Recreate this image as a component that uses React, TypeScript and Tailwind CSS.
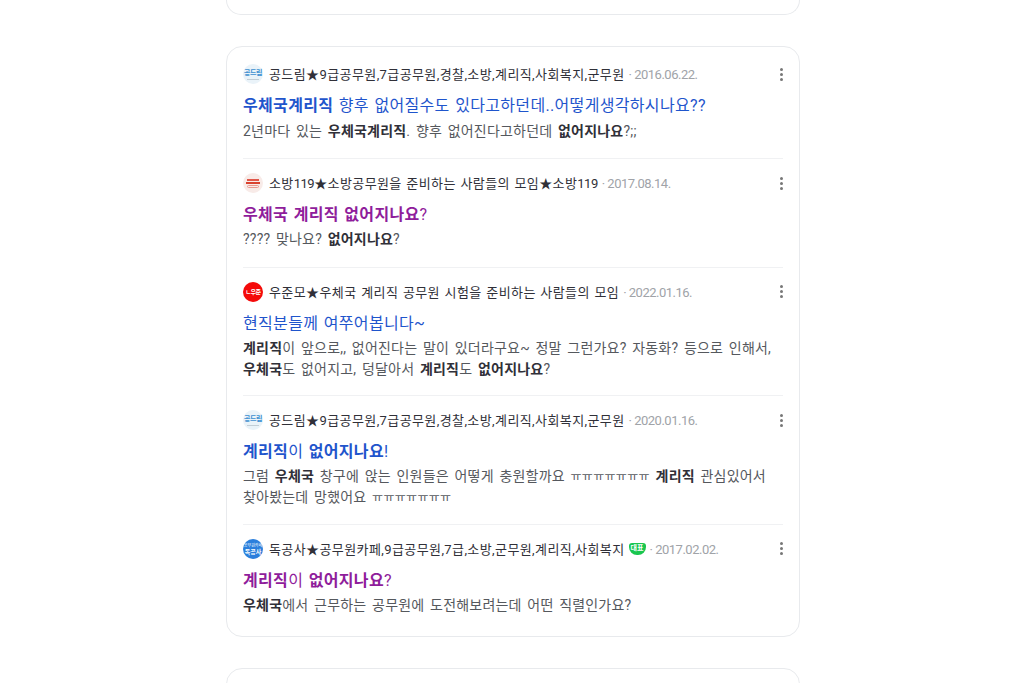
import { ReactNode } from 'react'

type Post = {
  logo: ReactNode
  cafe: ReactNode
  badge?: boolean
  date: string
  title: ReactNode
  visited?: boolean
  desc: ReactNode
}

function GongdreamLogo() {
  return (
    <div className="flex h-5 w-5 flex-col items-center justify-center rounded-full bg-[#eaf3f9]">
      <span className="text-[7px] leading-[8px] font-bold text-[#3d8fd0] whitespace-nowrap tracking-[-0.5px]">공드림</span>
      <span className="mt-[2px] h-px w-3 bg-[#c3ced6]" />
    </div>
  )
}

function SobangLogo() {
  return (
    <div className="flex h-5 w-5 flex-col items-center justify-center gap-px rounded-full bg-[#f8ebe8]">
      <span className="h-[2px] w-3 bg-[#e0574a]" />
      <span className="h-[2px] w-[14px] bg-[#d9432f]" />
      <span className="h-[3px] w-3 rounded-sm border border-[#e89a90]" />
    </div>
  )
}

function WoojunmoLogo() {
  return (
    <div className="flex h-5 w-5 items-center justify-center rounded-full bg-[#f40a0a]">
      <span className="text-[6px] font-bold leading-none text-white whitespace-nowrap tracking-[-0.5px]">ㄴ우준</span>
    </div>
  )
}

function DokgongsaLogo() {
  return (
    <div className="flex h-5 w-5 flex-col items-center justify-center rounded-full bg-[#2b7fdc]">
      <span className="text-[4px] leading-[5px] text-white whitespace-nowrap">공무원카페</span>
      <span className="text-[6px] font-bold leading-[7px] text-white whitespace-nowrap">독공사</span>
    </div>
  )
}

// 'ㅠ' runs sit tighter than the rest of the snippet
function Cry({ n = 7 }: { n?: number }) {
  return <span className="text-[12px] leading-[0] tracking-[0.3px]">{'ㅠ'.repeat(n)}</span>
}

const posts: Post[] = [
  {
    logo: <GongdreamLogo />,
    cafe: '공드림★9급공무원,7급공무원,경찰,소방,계리직,사회복지,군무원',
    date: '2016.06.22.',
    title: <><b>우체국계리직</b> 향후 없어질수도 있다고하던데..어떻게생각하시나요??</>,
    desc: <>2년마다 있는 <b>우체국계리직</b>. 향후 없어진다고하던데 <b>없어지나요</b>?;;</>,
  },
  {
    logo: <SobangLogo />,
    cafe: <>소방<span className="tracking-[-0.5px]">119</span>★소방공무원을 준비하는 사람들의 모임★소방<span className="tracking-[-0.5px]">119</span></>,
    date: '2017.08.14.',
    visited: true,
    title: <><b>우체국 계리직 없어지나요</b>?</>,
    desc: <>???? 맞나요? <b>없어지나요</b>?</>,
  },
  {
    logo: <WoojunmoLogo />,
    cafe: '우준모★우체국 계리직 공무원 시험을 준비하는 사람들의 모임',
    date: '2022.01.16.',
    title: <>현직분들께 여쭈어봅니다~</>,
    desc: <><b>계리직</b>이 앞으로,, 없어진다는 말이 있더라구요~ 정말 그런가요? 자동화? 등으로 인해서,<br /><b>우체국</b>도 없어지고, 덩달아서 <b>계리직</b>도 <b>없어지나요</b>?</>,
  },
  {
    logo: <GongdreamLogo />,
    cafe: '공드림★9급공무원,7급공무원,경찰,소방,계리직,사회복지,군무원',
    date: '2020.01.16.',
    title: <><b>계리직</b>이 <b>없어지나요</b>!</>,
    desc: <>그럼 <b>우체국</b> 창구에 앉는 인원들은 어떻게 충원할까요 <Cry /> <b>계리직</b> 관심있어서<br />찾아봤는데 망했어요 <Cry /></>,
  },
  {
    logo: <DokgongsaLogo />,
    cafe: '독공사★공무원카페,9급공무원,7급,소방,군무원,계리직,사회복지',
    badge: true,
    date: '2017.02.02.',
    visited: true,
    title: <><b>계리직</b>이 <b>없어지나요</b>?</>,
    desc: <><b>우체국</b>에서 근무하는 공무원에 도전해보려는데 어떤 직렬인가요?</>,
  },
]

function MoreDots() {
  return (
    <div className="flex w-[3px] flex-col gap-[2px]">
      <span className="h-[3px] w-[3px] rounded-full bg-[#777]" />
      <span className="h-[3px] w-[3px] rounded-full bg-[#777]" />
      <span className="h-[3px] w-[3px] rounded-full bg-[#777]" />
    </div>
  )
}

function PostItem({ post, first, last }: { post: Post; first: boolean; last: boolean }) {
  const bottom = first ? 'pb-[15px]' : last ? 'pb-[19px]' : 'pb-[15.5px]'
  return (
    <div className={`${first ? 'pt-[17px]' : 'border-t border-[#f0f1f3] pt-[14px]'} ${bottom}`}>
      <div className="flex h-5 items-center">
        <div className="mr-[6px] shrink-0">{post.logo}</div>
        <span className="pt-[2px] text-[13px] leading-5 text-[#303038] whitespace-nowrap tracking-[0.4px] [word-spacing:1px]">{post.cafe}</span>
        {post.badge && (
          <span className="ml-1 flex h-3 w-[17px] items-center justify-center rounded-t-[3px] rounded-b-[8px] bg-[#19c64f] text-[7px] font-bold leading-none text-white">대표</span>
        )}
        <span className="ml-1 pt-[2px] text-[13px] leading-5 text-[#a0a3a8] whitespace-nowrap tracking-[-0.5px]">· {post.date}</span>
        <div className="ml-auto"><MoreDots /></div>
      </div>
      <div className={`mt-[10px] text-[16px] leading-[24px] whitespace-nowrap tracking-[0.33px] [word-spacing:1.2px] ${post.visited ? 'text-[#8f1d9b]' : 'text-[#1f55cc]'}`}>
        {post.title}
      </div>
      <div className={`${first ? 'mt-[3px]' : 'mt-[2px]'} min-h-[22px] text-[14px] leading-[21px] text-[#55585d] whitespace-nowrap tracking-[0.2px] [word-spacing:2px] [&_b]:text-[#303038]`}>
        {post.desc}
      </div>
    </div>
  )
}

export default function App() {
  return (
    <div className="h-[683px] overflow-hidden bg-white font-['Roboto','Noto_Sans_CJK_KR',sans-serif]">
      <div className="ml-[226px] w-[574px]">
        <div className="h-[15px] rounded-b-2xl border border-t-0 border-[#e8eaed]" />
        <div className="mt-[31px] rounded-2xl border border-[#e8eaed] px-4">
          {posts.map((post, i) => (
            <PostItem key={i} post={post} first={i === 0} last={i === posts.length - 1} />
          ))}
        </div>
        <div className="mt-[31px] h-[40px] rounded-2xl border border-[#e8eaed]" />
      </div>
    </div>
  )
}
